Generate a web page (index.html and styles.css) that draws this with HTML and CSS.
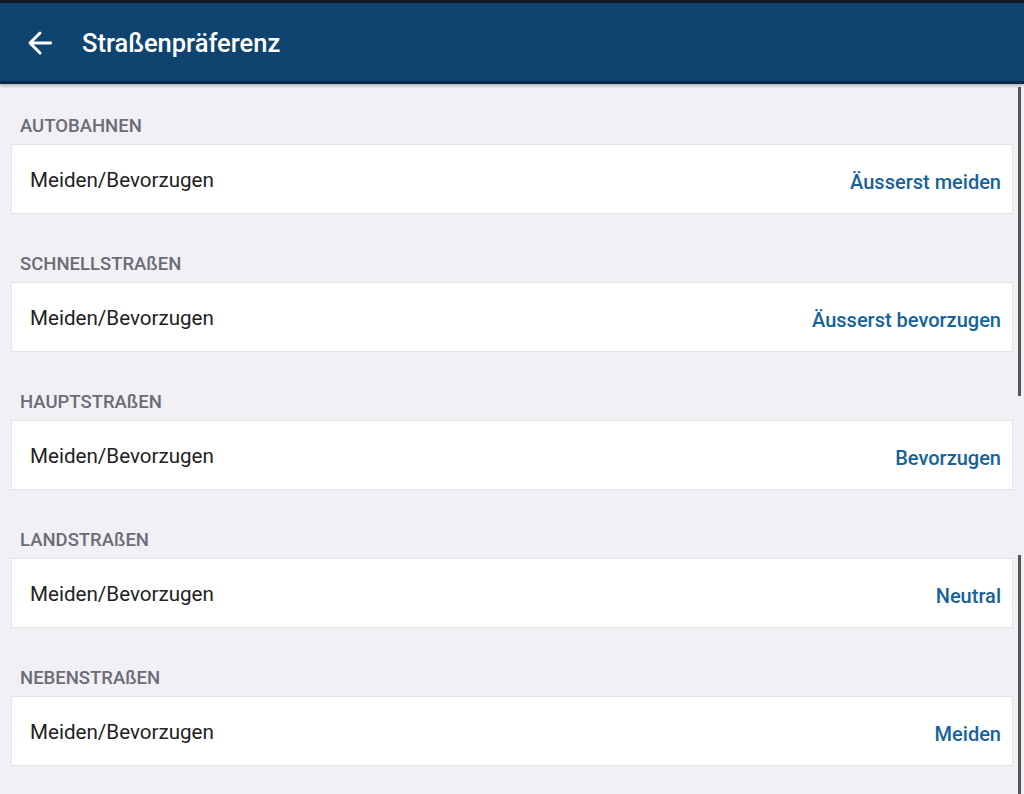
FILE: index.html
```html
<!DOCTYPE html>
<html lang="de">

<head>
    <meta charset="UTF-8">
    <meta name="viewport" content="width=device-width, initial-scale=1.0">
    <title>Straßenpräferenz</title>
    <link rel="stylesheet" href="styles.css">
</head>

<body>

    <header class="topbar">
        <svg class="back" width="32" height="32" viewBox="0 0 24 24">
            <path d="M20 12H5M12 4.5L4.5 12l7.5 7.5" fill="none" stroke="#fff" stroke-width="2.2" stroke-linecap="round" stroke-linejoin="round"/>
        </svg>
        <h1>Straßenpräferenz</h1>
    </header>

    <main class="list">
        <section class="group">
            <h2>AUTOBAHNEN</h2>
            <div class="row">
                <span class="label">Meiden/Bevorzugen</span>
                <span class="value">Äusserst meiden</span>
            </div>
        </section>

        <section class="group">
            <h2>SCHNELLSTRAßEN</h2>
            <div class="row">
                <span class="label">Meiden/Bevorzugen</span>
                <span class="value">Äusserst bevorzugen</span>
            </div>
        </section>

        <section class="group">
            <h2>HAUPTSTRAßEN</h2>
            <div class="row">
                <span class="label">Meiden/Bevorzugen</span>
                <span class="value">Bevorzugen</span>
            </div>
        </section>

        <section class="group">
            <h2>LANDSTRAßEN</h2>
            <div class="row">
                <span class="label">Meiden/Bevorzugen</span>
                <span class="value">Neutral</span>
            </div>
        </section>

        <section class="group">
            <h2>NEBENSTRAßEN</h2>
            <div class="row">
                <span class="label">Meiden/Bevorzugen</span>
                <span class="value">Meiden</span>
            </div>
        </section>
    </main>

    <!-- Scrollbalken -->
    <div class="scroll scroll-top"></div>
    <div class="scroll scroll-bottom"></div>

</body>

</html>
```

FILE: styles.css
```css
body {
    margin: 0;
    padding: 0;
    height: 794px;
    overflow: hidden;
    font-family: Roboto, "Liberation Sans", sans-serif;
    background-color: #f0f0f5;
}

.topbar {
    display: flex;
    align-items: center;
    height: 78px;
    border-top: 3px solid #121a22;
    border-bottom: 3px solid #0a2b47;
    background-color: #0f4470;
    box-shadow: 0 2px 3px rgba(0, 0, 0, 0.25);
    padding: 0 0 0 24px;
}

.back {
    display: block;
    margin-top: 1px;
}

.topbar h1 {
    margin: 2px 0 0 26px;
    font-size: 25.5px;
    font-weight: 500;
    color: #fff;
}

.list {
    padding-top: 32px;
}

.group {
    margin-bottom: 40px;
}

.group h2 {
    margin: 0 0 8px 20px;
    font-size: 18.5px;
    line-height: 20px;
    font-weight: 500;
    color: #6c6c75;
}

.row {
    display: flex;
    align-items: center;
    justify-content: space-between;
    height: 68px;
    margin: 0 11px;
    padding: 0 11px 0 18px;
    background-color: #fff;
    border: 1px solid #e2e2e7;
}

.label {
    font-size: 20.6px;
    color: #222;
    margin-top: 1px;
}

.value {
    font-size: 20px;
    font-weight: 500;
    color: #17629a;
    margin-top: 5px;
}

/* Scrollbalken rechts */
.scroll {
    position: absolute;
    right: 3px;
    width: 3px;
    background-color: #555;
}

.scroll-top {
    top: 87px;
    height: 309px;
}

.scroll-bottom {
    top: 555px;
    height: 239px;
}
```
